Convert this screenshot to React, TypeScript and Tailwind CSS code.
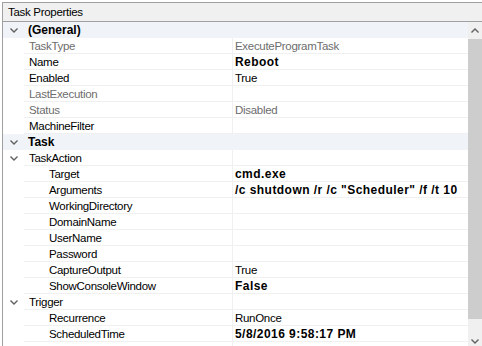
import React from 'react';

type Row = {
  name: string;
  value?: string;
  kind: 'category' | 'group' | 'prop';
  indent?: boolean;
  readOnly?: boolean;
  bold?: boolean;
};

const rows: Row[] = [
  { name: '(General)', kind: 'category' },
  { name: 'TaskType', value: 'ExecuteProgramTask', kind: 'prop', readOnly: true },
  { name: 'Name', value: 'Reboot', kind: 'prop', bold: true },
  { name: 'Enabled', value: 'True', kind: 'prop' },
  { name: 'LastExecution', value: '', kind: 'prop', readOnly: true },
  { name: 'Status', value: 'Disabled', kind: 'prop', readOnly: true },
  { name: 'MachineFilter', value: '', kind: 'prop' },
  { name: 'Task', kind: 'category' },
  { name: 'TaskAction', value: '', kind: 'group' },
  { name: 'Target', value: 'cmd.exe', kind: 'prop', indent: true, bold: true },
  { name: 'Arguments', value: '/c shutdown /r /c "Scheduler" /f /t 10', kind: 'prop', indent: true, bold: true },
  { name: 'WorkingDirectory', value: '', kind: 'prop', indent: true },
  { name: 'DomainName', value: '', kind: 'prop', indent: true },
  { name: 'UserName', value: '', kind: 'prop', indent: true },
  { name: 'Password', value: '', kind: 'prop', indent: true },
  { name: 'CaptureOutput', value: 'True', kind: 'prop', indent: true },
  { name: 'ShowConsoleWindow', value: 'False', kind: 'prop', indent: true, bold: true },
  { name: 'Trigger', value: '', kind: 'group' },
  { name: 'Recurrence', value: 'RunOnce', kind: 'prop', indent: true },
  { name: 'ScheduledTime', value: '5/8/2016 9:58:17 PM', kind: 'prop', indent: true, bold: true },
  { name: '', value: '', kind: 'prop' },
];

function Chevron({ up }: { up?: boolean }) {
  return (
    <svg width="8" height="5" viewBox="0 0 8 5">
      <polyline
        points={up ? '0.5,4.5 4,1 7.5,4.5' : '0.5,0.5 4,4 7.5,0.5'}
        fill="none"
        stroke="#606060"
        strokeWidth="1.4"
      />
    </svg>
  );
}

function GridRow({ row }: { row: Row }) {
  if (row.kind === 'category') {
    return (
      <div className="flex h-4 shrink-0 items-center bg-[#f0f4f8]">
        <div className="flex w-[21px] shrink-0 justify-center pl-[1px]">
          <Chevron />
        </div>
        <span className="pl-[4px] pt-[1px] text-[12px] font-bold tracking-normal text-black">{row.name}</span>
      </div>
    );
  }
  return (
    <div className="flex h-4 shrink-0">
      <div className="flex w-[21px] shrink-0 items-center justify-center bg-white pl-[1px]">
        {row.kind === 'group' && <Chevron />}
      </div>
      <div className="flex flex-1 border-b border-[#f0f0f0] bg-white">
        <div
          className={
            'flex w-[209px] shrink-0 items-center border-r border-[#f0f0f0] pt-[1px] ' +
            (row.indent ? 'pl-[25px] ' : 'pl-[5px] ') +
            (row.readOnly ? 'text-[#6d6d6d]' : 'text-black')
          }
        >
          {row.name}
        </div>
        <div
          className={
            'flex items-center whitespace-nowrap pl-[2px] pt-[1px] ' +
            (row.bold ? 'text-[12px] font-bold tracking-[0.45px] ' : '') +
            (row.readOnly ? 'text-[#6d6d6d]' : 'text-black')
          }
        >
          {row.value}
        </div>
      </div>
    </div>
  );
}

export default function App() {
  return (
    <div className="h-[346px] w-[482px] overflow-hidden bg-white pl-[2px] pt-[2px] font-['Liberation_Sans',Arial,sans-serif] text-[11.5px] leading-[15px] tracking-[-0.3px]">
      <div className="flex h-[344px] flex-col border-l border-t border-[#a0a0a0]">
        <div className="flex h-[19px] shrink-0 items-center border-b border-[#a0a0a0] bg-[#f0f0f0] pl-[5px] pt-[1px] text-black">
          Task Properties
        </div>
        <div className="flex flex-1 overflow-hidden">
          <div className="flex w-[465px] shrink-0 flex-col">
            {rows.map((row, i) => (
              <GridRow key={i} row={row} />
            ))}
          </div>
          <div className="flex flex-1 flex-col bg-[#f0f0f0]">
            <div className="flex h-[17px] shrink-0 items-center justify-center pr-[1px]">
              <Chevron up />
            </div>
            <div className="h-[280px] shrink-0 bg-[#cdcdcd]" />
            <div className="flex flex-1 items-end justify-center pb-[2px] pr-[1px]">
              <Chevron />
            </div>
          </div>
        </div>
      </div>
    </div>
  );
}
